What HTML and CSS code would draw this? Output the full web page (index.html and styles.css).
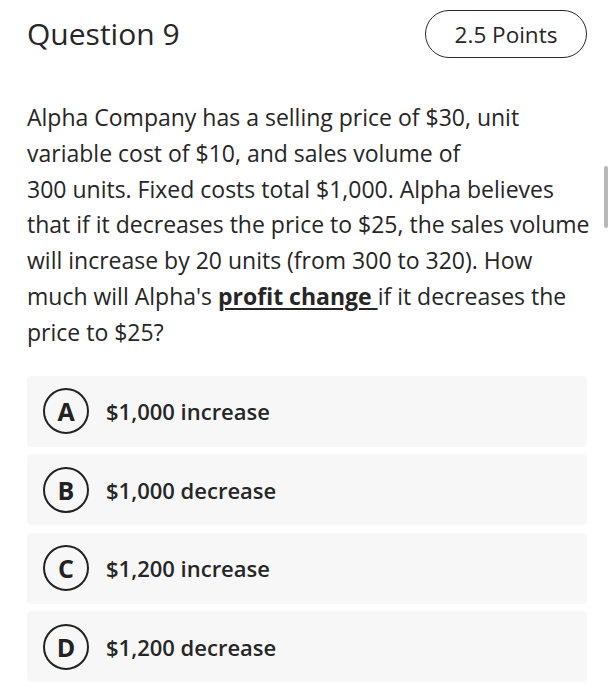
FILE: index.html
```html
<!DOCTYPE html>
<html>
<head>
<meta charset="utf-8">
<link rel="stylesheet" href="styles.css">
</head>
<body>
<div class="page">
  <div class="header">
    <h1 class="title">Question 9</h1>
    <div class="points">2.5 Points</div>
  </div>
  <p class="question">Alpha Company has a selling price of $30, unit variable cost of $10, and sales volume of<br>300 units. Fixed costs total $1,000. Alpha believes that if it decreases the price to $25, the sales volume will increase by 20 units (from 300 to 320). How much will Alpha's <u class="em">profit change </u>if it decreases the price to $25?</p>
  <div class="options">
    <div class="option"><span class="letter">A</span><span class="label">$1,000 increase</span></div>
    <div class="option"><span class="letter">B</span><span class="label">$1,000 decrease</span></div>
    <div class="option"><span class="letter">C</span><span class="label">$1,200 increase</span></div>
    <div class="option"><span class="letter">D</span><span class="label">$1,200 decrease</span></div>
  </div>
</div>
<div class="scrollbar"></div>
</body>
</html>
```
FILE: styles.css
```css
html, body {
  margin: 0;
  padding: 0;
  background: #fff;
}
body {
  font-family: "Open Sans", "Noto Sans", sans-serif;
  color: #262626;
}
.page {
  width: 560px;
  padding: 10px 0 0 27px;
}
.header {
  display: flex;
  justify-content: space-between;
  align-items: center;
  height: 48px;
}
.title {
  margin: 0;
  font-size: 30px;
  font-weight: 400;
  line-height: 48px;
}
.points {
  box-sizing: border-box;
  width: 162px;
  height: 48px;
  border: 1.5px solid #2a2a2a;
  border-radius: 24px;
  display: flex;
  align-items: center;
  justify-content: center;
  font-size: 22.5px;
}
.question {
  margin: 42px 0 0 0;
  width: 566px;
  font-size: 23px;
  line-height: 35.8px;
}
.em {
  font-weight: 700;
  text-decoration-thickness: 2px;
  text-underline-offset: 3px;
}
.options {
  margin-top: 25px;
  display: flex;
  flex-direction: column;
  gap: 7.5px;
}
.option {
  height: 71px;
  background: #f7f7f7;
  border-radius: 4px;
  display: flex;
  align-items: center;
  padding-left: 16px;
}
.letter {
  box-sizing: border-box;
  width: 46px;
  height: 46px;
  border: 2.5px solid #222;
  border-radius: 50%;
  display: flex;
  align-items: center;
  justify-content: center;
  font-size: 25px;
  font-weight: 700;
  color: #222;
}
.label {
  margin-left: 17px;
  font-size: 22px;
  font-weight: 600;
  color: #262626;
}
.scrollbar {
  position: absolute;
  left: 604px;
  top: 166px;
  width: 4px;
  height: 62px;
  border-radius: 2px;
  background: #b8b8b8;
}
```
